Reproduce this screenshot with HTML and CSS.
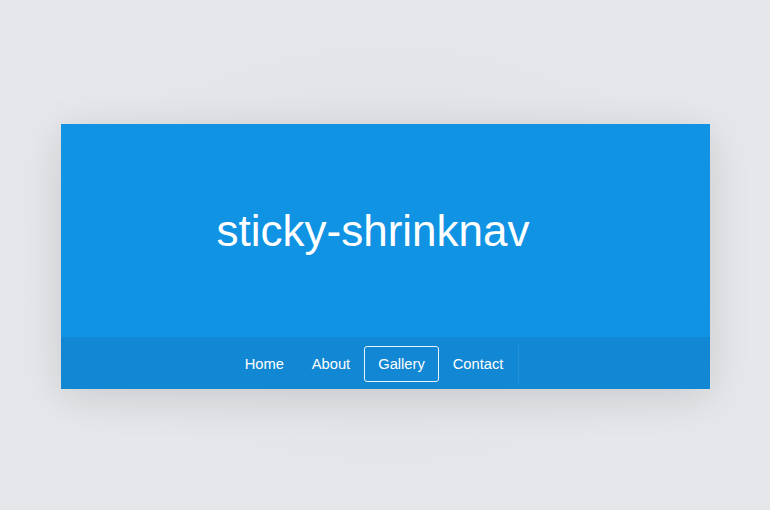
FILE: index.html
```html
<!DOCTYPE html>
<html lang="en">
<head>
<meta charset="utf-8">
<title>sticky-shrinknav</title>
<link rel="stylesheet" href="styles.css">
</head>
<body>
<div class="card">
  <header class="hero">
    <h1 class="title">sticky-shrinknav</h1>
  </header>
  <nav class="nav">
    <ul class="menu">
      <li><a class="link" href="#">Home</a></li>
      <li><a class="link" href="#">About</a></li>
      <li><a class="link active" href="#">Gallery</a></li>
      <li><a class="link" href="#">Contact</a></li>
      <li class="divider"></li>
    </ul>
  </nav>
</div>
</body>
</html>
```
FILE: styles.css
```css
html, body {
  margin: 0;
  padding: 0;
}
body {
  width: 770px;
  height: 510px;
  background: radial-gradient(ellipse at center, #dfe0e3 0%, #e6e7ea 70%);
  display: flex;
  align-items: center;
  justify-content: center;
  font-family: "Liberation Sans", Arial, sans-serif;
}
.card {
  width: 649px;
  margin-top: 3px;
  box-shadow: 0 8px 40px rgba(0, 0, 0, 0.12);
}
.hero {
  height: 213px;
  background: #1193e4;
  display: flex;
  align-items: center;
  justify-content: center;
  padding-right: 24px;
  box-sizing: border-box;
}
.title {
  margin: 0;
  color: #fff;
  font-weight: normal;
  font-size: 44px;
  letter-spacing: 0;
}
.nav {
  height: 52px;
  background: #1287d3;
  display: flex;
  align-items: center;
  justify-content: center;
  padding-right: 20px;
  padding-top: 2px;
  box-sizing: border-box;
}
.menu {
  list-style: none;
  margin: 0;
  padding: 0;
  display: flex;
  align-items: center;
  gap: 0;
}
.link {
  display: block;
  color: #fff;
  text-decoration: none;
  font-size: 14.7px;
  line-height: 34px;
  padding: 0 13px;
  border: 1px solid transparent;
  border-radius: 3px;
}
.link.active {
  border-color: rgba(255, 255, 255, 0.9);
}
.divider {
  width: 1px;
  height: 38px;
  margin-left: 1px;
  background: rgba(255, 255, 255, 0.08);
}
```
